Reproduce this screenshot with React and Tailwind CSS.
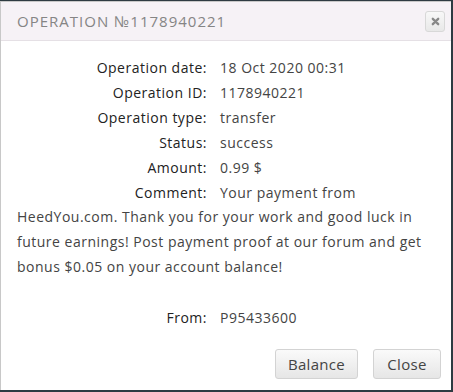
import React from "react";

const rows = [
    { label: "Operation date:", value: "18 Oct 2020 00:31" },
    { label: "Operation ID:", value: "1178940221" },
    { label: "Operation type:", value: "transfer" },
    { label: "Status:", value: "success" },
    { label: "Amount:", value: "0.99 $" },
    {
        label: "Comment:",
        value: "Your payment from HeedYou.com. Thank you for your work and good luck in future earnings! Post payment proof at our forum and get bonus $0.05 on your account balance!",
    },
];

const Row = ({ label, value }) => (
    <div>
        <span className="inline-block w-[203px] pr-[13px] text-right font-medium text-[#222]">
            {label}
        </span>
        <span className="text-[#444]">{value}</span>
    </div>
);

const Button = ({ children, className }) => (
    <button
        className={`h-[30px] rounded-[3px] border border-[#d3d3d3] bg-gradient-to-b from-[#fafafa] to-[#e6e6e6] text-[15px] tracking-[0.3px] text-[#444] ${className}`}
    >
        {children}
    </button>
);

export default function App() {
    return (
        <div className="h-[392px] w-[453px] bg-[#2e3b42] pt-[1px] pr-[2px] pb-[2px] font-['Open_Sans',sans-serif]">
            <div className="flex h-full flex-col border-l border-t border-[#c8c8c8] bg-white">
                {/* Header */}
                <div className="flex h-[39px] items-center justify-between border-b border-[#e5e0e5] bg-[#f6f2f6] pl-[16px] pr-[5px]">
                    <h1 className="text-[15px] tracking-[1px] text-[#858585]">
                        OPERATION №1178940221
                    </h1>
                    <button className="mr-[1px] flex h-[21px] w-[20px] items-center justify-center rounded-[3px] border border-[#d8d8d8] bg-gradient-to-b from-[#f8f8f8] to-[#e8e8e8]">
                        <svg width="9" height="9" viewBox="0 0 10 10">
                            <path
                                d="M2 2 L8 8 M8 2 L2 8"
                                stroke="#888"
                                strokeWidth="2.6"
                                strokeLinecap="round"
                            />
                        </svg>
                    </button>
                </div>

                {/* Body */}
                <div className="flex-1 px-[16px] pt-[15px] text-[14px] leading-[24.9px] tracking-[0.5px]">
                    {rows.map((r) => (
                        <Row key={r.label} label={r.label} value={r.value} />
                    ))}
                    <div className="mt-[26px]">
                        <Row label="From:" value="P95433600" />
                    </div>
                </div>

                {/* Footer */}
                <div className="flex justify-end gap-[15px] pr-[10px] pb-[11px]">
                    <Button className="w-[83px]">Balance</Button>
                    <Button className="w-[68px]">Close</Button>
                </div>
            </div>
        </div>
    );
}
